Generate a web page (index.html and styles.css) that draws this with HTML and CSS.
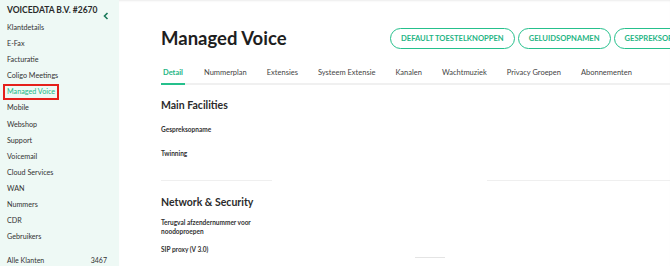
FILE: index.html
```html
<!DOCTYPE html>
<html lang="nl">
  <head>
    <meta charset="UTF-8" />
    <title>Managed Voice</title>
    <link rel="stylesheet" href="styles.css">
  </head>
  <body>
    <aside class="sidebar">
      <div class="sidebar-header">
        <span class="account">VOICEDATA B.V. #2670</span>
        <span class="collapse">
          <svg width="6" height="8" viewBox="0 0 6 8"><path d="M4.5 1 L1.5 4 L4.5 7" fill="none" stroke="#1a7a5a" stroke-width="1.6"/></svg>
        </span>
      </div>
      <nav class="menu">
        <a>Klantdetails</a>
        <a>E-Fax</a>
        <a>Facturatie</a>
        <a>Coligo Meetings</a>
        <a class="active">Managed Voice</a>
        <a>Mobile</a>
        <a>Webshop</a>
        <a>Support</a>
        <a>Voicemail</a>
        <a>Cloud Services</a>
        <a>WAN</a>
        <a>Nummers</a>
        <a>CDR</a>
        <a>Gebruikers</a>
      </nav>
      <div class="all-clients">
        <span>Alle Klanten</span>
        <span>3467</span>
      </div>
    </aside>

    <main class="main">
      <div class="page-head">
        <h1>Managed Voice</h1>
        <div class="actions">
          <button class="pill">DEFAULT TOESTELKNOPPEN</button>
          <button class="pill">GELUIDSOPNAMEN</button>
          <button class="pill">GESPREKSOPNAMEN</button>
        </div>
      </div>

      <div class="tabs">
        <a class="tab active">Detail</a>
        <a class="tab">Nummerplan</a>
        <a class="tab">Extensies</a>
        <a class="tab">Systeem Extensie</a>
        <a class="tab">Kanalen</a>
        <a class="tab">Wachtmuziek</a>
        <a class="tab">Privacy Groepen</a>
        <a class="tab">Abonnementen</a>
      </div>

      <section class="section facilities">
        <h2>Main Facilities</h2>
        <div class="field">Gespreksopname</div>
        <div class="field">Twinning</div>
        <div class="rules">
          <span class="rule left"></span>
          <span class="rule right"></span>
        </div>
      </section>

      <section class="section network">
        <h2>Network &amp; Security</h2>
        <div class="field">Terugval afzendernummer voor<br>noodoproepen</div>
        <div class="field">SIP proxy (V 3.0)</div>
        <span class="rule small"></span>
      </section>
    </main>
  </body>
</html>
```

FILE: styles.css
```css
body {
  margin: 0;
  padding: 0;
  width: 670px;
  height: 266px;
  overflow: hidden;
  display: flex;
  font-family: "Lato", "Open Sans", sans-serif;
  color: #333;
  background-color: #fff;
}

/* Sidebar */
.sidebar {
  width: 119px;
  flex-shrink: 0;
  background-color: #eef9f5;
  display: flex;
  flex-direction: column;
  padding: 4px 0 0 0;
  box-sizing: border-box;
}

.sidebar-header {
  display: flex;
  justify-content: space-between;
  align-items: flex-start;
  padding: 0 10px 0 7px;
}

.account {
  font-size: 8.5px;
  font-weight: 700;
  color: #2a2a2a;
  line-height: 12px;
}

.collapse {
  margin-top: 8px;
  display: flex;
}

.menu {
  display: flex;
  flex-direction: column;
  margin-top: 0;
}

.menu a {
  display: block;
  align-self: flex-start;
  font-size: 7.2px;
  line-height: 10.1px;
  height: 10.1px;
  padding: 1px 2px;
  margin-left: 3px;
  border: 2px solid transparent;
  color: #333;
}

.menu a.active {
  color: #20b886;
  border-color: #e5201b;
}

.all-clients {
  display: flex;
  justify-content: space-between;
  font-size: 7px;
  color: #333;
  padding: 0 12px 0 7px;
  margin-top: 11px;
}

/* Main area */
.main {
  flex: 1;
  padding: 0 0 0 42px;
  box-shadow: inset 0 2px 2px -1px rgba(0, 0, 0, 0.08);
  overflow: hidden;
  min-width: 0;
}

.page-head {
  display: flex;
  align-items: center;
  padding-top: 26px;
  height: 24px;
}

.page-head h1 {
  width: 229px;
  flex-shrink: 0;
  margin: 0;
  font-size: 18.5px;
  font-weight: 700;
  color: #1e1e1e;
  white-space: nowrap;
}

.actions {
  display: flex;
  gap: 3px;
  flex-shrink: 0;
}

.pill {
  height: 21px;
  padding: 0 10px;
  border: 1.5px solid #25c08c;
  border-radius: 11px;
  background-color: #fff;
  color: #1fb585;
  font-family: "Lato", sans-serif;
  font-weight: 700;
  font-size: 7.6px;
  white-space: nowrap;
}

.tabs {
  display: flex;
  margin-top: 14px;
  border-bottom: 2px solid #f0f0f0;
  white-space: nowrap;
}

.tab {
  font-size: 7.5px;
  color: #444;
  padding: 4px 0 6px;
  margin-right: 20px;
  margin-bottom: -2px;
  border-bottom: 2px solid transparent;
}

.tab:first-child {
  padding: 4px 2px 6px;
  margin-right: 19px;
}

.tab.active {
  color: #1db584;
  font-weight: 700;
  border-bottom-color: #25c08c;
}

.section h2 {
  margin: 0;
  font-size: 10.5px;
  line-height: 13px;
  font-weight: 700;
  color: #2b2b2b;
}

.field {
  font-size: 6.5px;
  font-weight: 700;
  color: #333;
  line-height: 9px;
}

.facilities {
  padding-top: 14px;
}

.facilities h2 {
  margin-bottom: 13px;
}

.facilities .field {
  margin-bottom: 15px;
}

.network {
  padding-top: 15px;
}

.network h2 {
  margin-bottom: 9px;
}

.network .field {
  margin-bottom: 9px;
}

.rules {
  display: flex;
  justify-content: space-between;
  margin-top: 22px;
}

.rule {
  display: block;
  height: 1px;
  background-color: #efefef;
}

.rule.left {
  width: 111px;
}

.rule.right {
  width: 183px;
}

.rule.small {
  width: 30px;
  margin-left: 254px;
  margin-top: -6px;
  background-color: #e4e4e4;
}
```
